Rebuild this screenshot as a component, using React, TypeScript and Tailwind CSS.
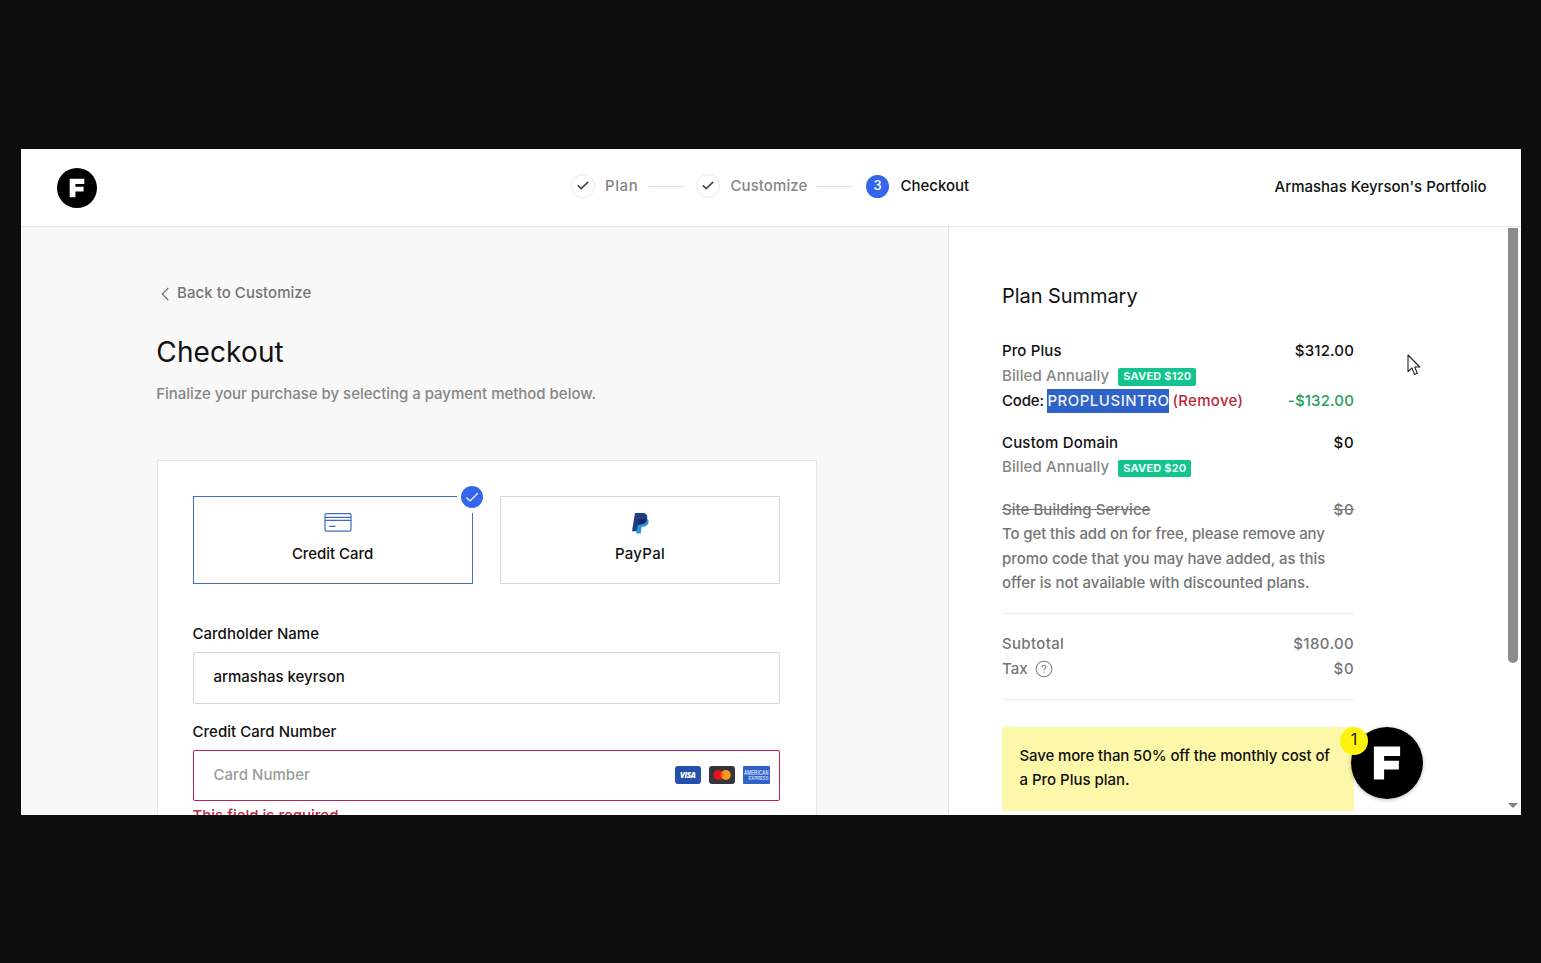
import type { ReactNode } from "react";

function FMark({ className }: { className: string }) {
  return (
    <svg viewBox="0 0 40 40" className={className} aria-hidden="true">
      <circle cx="20" cy="20" r="20" fill="#000" />
      <path d="M12.7 10.8H27.3V16.1H18.4V18.7H26.6V23.6H18.4V29.2H12.7Z" fill="#fff" />
    </svg>
  );
}

function DoneStep({ label, className }: { label: string; className: string }) {
  return (
    <div className="flex items-center">
      <span className="flex size-6 items-center justify-center rounded-full border border-[#e9e9e9]">
        <svg viewBox="0 0 14 14" className="size-3.5 -translate-y-px" fill="none" stroke="#4a4a4a" strokeWidth="1.7">
          <path d="M1.8 7.3 5.2 10.6 12.2 3.8" />
        </svg>
      </span>
      <span className={className}>{label}</span>
    </div>
  );
}

function Row({ left, right, className = "" }: { left: ReactNode; right?: ReactNode; className?: string }) {
  return (
    <div className={`flex h-[24.5px] items-center justify-between whitespace-nowrap ${className}`}>
      <span className="flex items-center">{left}</span>
      {right}
    </div>
  );
}

function Saved({ children }: { children: ReactNode }) {
  return (
    <span className="mt-[2px] ml-[9px] flex h-[17.5px] items-center rounded-[2px] bg-[#14c38e] px-[5px] pb-px text-[11px] font-bold tracking-[0.2px] text-[#e6fff6]">
      {children}
    </span>
  );
}

function CardBadges() {
  return (
    <div className="flex gap-2">
      <svg viewBox="0 0 26 18" className="h-[18px] w-[26px]">
        <rect width="26" height="18" rx="3" fill="#2250ac" />
        <text x="13" y="12" textAnchor="middle" fontSize="8" fontWeight="800" fontStyle="italic" fill="#fff" fontFamily="Open Sans, sans-serif" textLength="16">
          VISA
        </text>
      </svg>
      <svg viewBox="0 0 26 18" className="h-[18px] w-[26px]">
        <rect width="26" height="18" rx="3" fill="#35343a" />
        <circle cx="9.4" cy="9" r="5" fill="#e3121c" />
        <circle cx="16.8" cy="9" r="5" fill="#f59a1c" />
        <path d="M13.1 5.6a5 5 0 0 1 0 6.8 5 5 0 0 1 0-6.8Z" fill="#f5600f" />
      </svg>
      <svg viewBox="0 0 27 18" className="h-[18px] w-[27px] overflow-visible">
        <rect width="27" height="18" rx="1" fill="#2f62c6" />
        <text x="1" y="8.8" fontSize="6.4" fontWeight="700" fill="#c9d9fa" fontFamily="Liberation Sans, sans-serif" textLength="24.5" lengthAdjust="spacingAndGlyphs">
          AMERICAN
        </text>
        <text x="5.5" y="14.4" fontSize="6.2" fontWeight="700" fill="#c9d9fa" fontFamily="Liberation Sans, sans-serif" textLength="20" lengthAdjust="spacingAndGlyphs">
          EXPRESS
        </text>
      </svg>
    </div>
  );
}

export default function App() {
  return (
    <div className="h-[963px] w-[1541px] overflow-hidden bg-[#0d0d0d] pt-[149px] pl-[21px] font-['Inter','Liberation_Sans',sans-serif] text-[15px] leading-[24.5px] font-medium text-[#111]">
      <div className="relative flex h-[666px] w-[1500px] flex-col overflow-hidden bg-white">
        <header className="flex h-[78px] shrink-0 items-center border-b border-[#e6e6e6] pr-[34.5px] pl-[36.4px]">
          <FMark className="mt-px size-10" />
          <nav className="mt-[-3px] ml-[473.6px] flex w-[422px] items-center whitespace-nowrap text-[#868686]">
            <DoneStep label="Plan" className="ml-[10px] w-[44px] tracking-[0.6px]" />
            <span className="h-px w-[35px] bg-[#e2e2e2]" />
            <span className="w-[12.5px]" />
            <DoneStep label="Customize" className="ml-[10px] w-[86.5px] tracking-[0.08px]" />
            <span className="h-px w-[35px] bg-[#e2e2e2]" />
            <span className="ml-3.5 flex size-[23px] items-center justify-center rounded-full bg-[#3366ec] text-[13px] leading-none text-white">
              <span className="-translate-y-px">3</span>
            </span>
            <span className="ml-[11.5px] text-[#111]">Checkout</span>
          </nav>
          <span className="ml-auto whitespace-nowrap">Armashas Keyrson's Portfolio</span>
        </header>

        <div className="flex min-h-0 flex-1">
          <main className="w-[928.4px] shrink-0 border-r border-[#e2e2e2] bg-[#f8f8f8] pt-[54px] pl-[136px]">
            <a className="flex h-6 items-center text-[#757575]">
              <svg viewBox="0 0 8 14" className="mt-0.5 ml-[3.5px] h-3.5 w-2" fill="none" stroke="#757575" strokeWidth="1.2">
                <path d="M7.2 1 1.2 7l6 6" />
              </svg>
              <span className="ml-[8.6px] tracking-[0.04px]">Back to Customize</span>
            </a>
            <h1 className="mt-[27px] ml-[-0.7px] h-10 text-[28px] leading-10 font-normal tracking-[0.12px]">Checkout</h1>
            <p className="mt-[9.5px] ml-[-0.8px] h-6 leading-6 tracking-[-0.02px] text-[#868686]">Finalize your purchase by selecting a payment method below.</p>

            <section className="mt-[54px] h-[440px] w-[660px] border border-[#e6e6e6] bg-white px-[35px] pt-[35px]">
              <div className="flex gap-[27px]">
                <div className="relative flex h-[88px] w-[280px] flex-col items-center border border-[#4170c4] pt-4">
                  <svg viewBox="0 0 28 20" className="ml-[10px] h-5 w-7" fill="none" stroke="#3d6cb8" strokeWidth="1.2">
                    <rect x="1" y="0.6" width="26" height="17.5" rx="1.6" />
                    <path d="M1 4.4h26M1 7.4h26M5 13.3h6.5" />
                  </svg>
                  <span className="mt-[9px] mr-px leading-6 tracking-[-0.05px]">Credit Card</span>
                  <span className="absolute -top-[15px] -right-[15.5px] flex size-[31px] items-center justify-center rounded-full bg-white">
                    <span className="flex size-[22px] items-center justify-center rounded-full bg-[#3366ec]">
                      <svg viewBox="0 0 14 14" className="size-3.5" fill="none" stroke="#fff" strokeWidth="1.2">
                        <path d="M1.3 7.5 5 11 12.8 3.3" />
                      </svg>
                    </span>
                  </span>
                </div>
                <div className="flex h-[88px] w-[280px] flex-col items-center border border-[#d8d8d8] pt-4">
                  <svg viewBox="0 0 17 21" className="h-[21px] w-[17px]">
                    <path d="M5.5 6.3H16C17.8 9.6 15.6 13.6 10.8 13.8L9.6 14 8.7 20.4H4.4Z" fill="#2497d6" />
                    <path d="M3 0H10.5C14.5 0 16 2.6 15 6.2 14 9.9 11.3 11.2 7.8 11.3L6 12 4.6 18.3H0Z" fill="#203d86" />
                    <path d="M6.8 6.2H15C14 9.9 11.3 11.2 7.8 11.3L6 12Z" fill="#1a2465" />
                  </svg>
                  <span className="mt-[8px] leading-6 tracking-[0.3px]">PayPal</span>
                </div>
              </div>

              <label className="mt-[38.5px] ml-[-0.5px] block h-6 leading-6 tracking-[0.03px]">Cardholder Name</label>
              <div className="mt-[5.5px] flex h-[52px] w-[587px] items-center rounded-[2px] border border-[#d8d8d8] px-[19.5px]">
                <span className="-mt-px">armashas keyrson</span>
              </div>
              <label className="mt-[16.5px] ml-[-0.5px] block h-6 leading-6 tracking-[0.03px]">Credit Card Number</label>
              <div className="mt-[5.5px] flex h-[51px] w-[587px] items-center justify-between rounded-[2px] border border-[#bb2350] pr-[9px] pl-[19.5px]">
                <span className="mt-px tracking-[0.04px] text-[#9b9b9b]">Card Number</span>
                <CardBadges />
              </div>
              <p className="mt-[3.5px] ml-[-0.5px] text-[#c02548]">This field is required</p>
            </section>
          </main>

          <aside className="w-[558.6px] shrink-0 pt-[53px] pl-[52.6px]">
            <div className="w-[352px]">
              <h2 className="h-8 text-[20px] leading-8 font-normal tracking-[-0.06px]">Plan Summary</h2>
              <Row className="mt-[27px]" left={<span className="tracking-[0.12px]">Pro Plus</span>} right={<span className="tracking-[0.15px]">$312.00</span>} />
              <Row left={<><span className="tracking-[0.1px] text-[#868686]">Billed Annually</span><Saved>SAVED $120</Saved></>} />
              <Row
                className="mt-[0.5px]"
                left={
                  <>
                    <span className="tracking-[-0.16px]">Code:</span>
                    <span className="ml-[3.5px] h-[24px] w-[122px] bg-[#2f63c8] leading-6 tracking-[0.5px] text-[#eef3ff]">PROPLUSINTRO</span>
                    <span className="ml-[3px] tracking-[0.3px] text-[#b9283c]">(Remove)</span>
                  </>
                }
                right={<span className="tracking-[0.14px] text-[#1f9d62]">-$132.00</span>}
              />
              <Row className="mt-[17.5px]" left={<span className="tracking-[0.18px]">Custom Domain</span>} right={<span className="-mr-[0.5px] tracking-[0.8px]">$0</span>} />
              <Row left={<><span className="tracking-[0.1px] text-[#868686]">Billed Annually</span><Saved>SAVED $20</Saved></>} />
              <Row className="mt-[18px] text-[#757575]" left={<span className="tracking-[0.05px] line-through">Site Building Service</span>} right={<span className="-mr-[0.5px] tracking-[0.8px] line-through">$0</span>} />
              <p className="whitespace-nowrap text-[#757575]">
                <span className="block tracking-[-0.12px]">To get this add on for free, please remove any</span>
                <span className="block tracking-[-0.04px]">promo code that you may have added, as this</span>
                <span className="block tracking-[-0.05px]">offer is not available with discounted plans.</span>
              </p>
              <hr className="mt-[17.5px] border-[#ececec]" />
              <Row className="mt-[17.5px] text-[#757575]" left={<span className="tracking-[0.33px]">Subtotal</span>} right={<span className="tracking-[0.36px]">$180.00</span>} />
              <Row
                className="mt-[0.5px] text-[#757575]"
                left={
                  <>
                    <span>Tax</span>
                    <svg viewBox="0 0 18 18" className="ml-[7px] size-[18px]" fill="none" stroke="#858585" strokeWidth="1.1">
                      <circle cx="9" cy="9" r="7.8" />
                      <path d="M7 7.3c0-2.7 4-2.6 4-.2 0 1.6-2 1.6-2 3.1M9 11.6v1.2" />
                    </svg>
                  </>
                }
                right={<span className="-mr-[0.5px] tracking-[0.8px]">$0</span>}
              />
              <hr className="mt-[17.5px] border-[#ececec]" />
              <div className="mt-[27px] h-[84px] bg-[#fdf7a9] pt-[17px] pl-[17.5px] whitespace-nowrap">
                <span className="block tracking-[-0.13px]">Save more than 50% off the monthly cost of</span>
                <span className="block tracking-[-0.02px]">a Pro Plus plan.</span>
              </div>
            </div>
          </aside>

          <div className="flex w-[10px] shrink-0 flex-col items-center justify-between pb-[7px]">
            <span className="mt-px h-[435px] w-2.5 rounded-b-[5px] bg-[#8b8b8b]" />
            <svg viewBox="0 0 10 5" className="h-[5px] w-2.5" fill="#808080">
              <path d="M0 0H10L5 5Z" />
            </svg>
          </div>
        </div>

        <div className="absolute top-[578px] left-[1329.5px] size-[72px] rounded-full shadow-[0_1px_4px_rgba(0,0,0,0.25)]">
          <FMark className="size-[72px]" />
          <span className="absolute top-0 -left-[10.5px] flex size-7 items-center justify-center rounded-full bg-[#fdf30f] pb-1 text-base leading-none font-normal text-[#222]">1</span>
        </div>

        <svg viewBox="0 0 14 22" className="absolute top-[205px] left-[1386px] h-[22px] w-3.5" fill="#fff" stroke="#222" strokeWidth="1.1" strokeLinejoin="round">
          <path d="M1 1V17.6L4.9 14 7.6 20.4 10.3 19.2 7.7 13H12.8Z" />
        </svg>
      </div>
    </div>
  );
}
